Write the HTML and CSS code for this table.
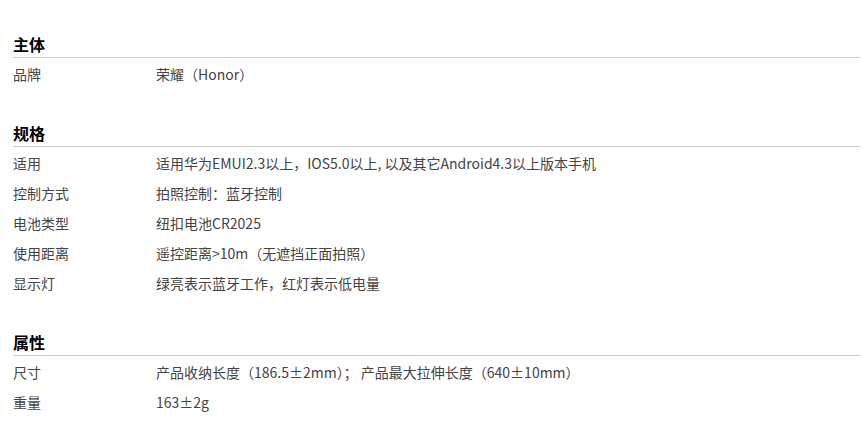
FILE: index.html
```html
<!DOCTYPE html>
<html lang="zh-CN">
<head>
    <meta charset="UTF-8">
    <meta name="viewport" content="width=device-width, initial-scale=1.0">
    <title>规格参数</title>
    <link rel="stylesheet" href="styles.css">
</head>
<body>

<div class="params">
    <div class="group">
        <h3 class="group-title">主体</h3>
        <div class="row"><span class="label">品牌</span><span class="value">荣耀（Honor）</span></div>
    </div>

    <div class="group">
        <h3 class="group-title">规格</h3>
        <div class="row"><span class="label">适用</span><span class="value">适用华为EMUI2.3以上，IOS5.0以上, 以及其它Android4.3以上版本手机</span></div>
        <div class="row"><span class="label">控制方式</span><span class="value">拍照控制：蓝牙控制</span></div>
        <div class="row"><span class="label">电池类型</span><span class="value">纽扣电池CR2025</span></div>
        <div class="row"><span class="label">使用距离</span><span class="value">遥控距离&gt;10m（无遮挡正面拍照）</span></div>
        <div class="row"><span class="label">显示灯</span><span class="value">绿亮表示蓝牙工作，红灯表示低电量</span></div>
    </div>

    <div class="group">
        <h3 class="group-title">属性</h3>
        <div class="row"><span class="label">尺寸</span><span class="value">产品收纳长度（186.5±2mm）； 产品最大拉伸长度（640±10mm）</span></div>
        <div class="row"><span class="label">重量</span><span class="value">163±2g</span></div>
    </div>
</div>

</body>
</html>
```

FILE: styles.css
```css
body {
    margin: 0;
    font-family: "Noto Sans CJK SC", "Noto Sans", sans-serif;
    font-size: 14px;
    color: #444;
    background: #fff;
}
.params {
    padding: 32px 1px 0 13px;
}
.group {
    margin-bottom: 33px;
}
.group-title {
    margin: 0;
    padding-bottom: 1px;
    font-size: 16px;
    line-height: 24px;
    font-weight: bold;
    color: #000;
    border-bottom: 1px solid #ccc;
}
.row {
    display: flex;
    height: 30px;
    line-height: 32px;
}
.label {
    width: 143px;
    flex-shrink: 0;
}
.value {
    flex: 1;
}
```
